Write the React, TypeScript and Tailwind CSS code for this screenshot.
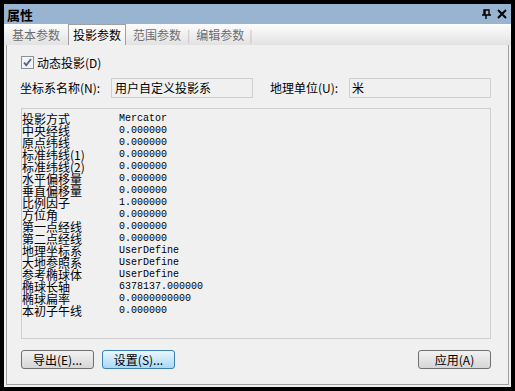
const cjk = "font-['SimSun','Noto_Sans_CJK_SC',sans-serif]"

const rows: [string, string][] = [
  ["投影方式", "Mercator"],
  ["中央经线", "0.000000"],
  ["原点纬线", "0.000000"],
  ["标准纬线(1)", "0.000000"],
  ["标准纬线(2)", "0.000000"],
  ["水平偏移量", "0.000000"],
  ["垂直偏移量", "0.000000"],
  ["比例因子", "1.000000"],
  ["方位角", "0.000000"],
  ["第一点经线", "0.000000"],
  ["第二点经线", "0.000000"],
  ["地理坐标系", "UserDefine"],
  ["大地参照系", "UserDefine"],
  ["参考椭球体", "UserDefine"],
  ["椭球长轴", "6378137.000000"],
  ["椭球扁率", "0.0000000000"],
  ["本初子午线", "0.000000"],
]

function Btn({ label, focused }: { label: string; focused?: boolean }) {
  return (
    <button
      className={
        "h-[19px] w-[73px] rounded-[3px] border text-[12px] leading-none text-black " +
        (focused
          ? "border-[#3c7fb1] bg-gradient-to-b from-[#eaf6fd] to-[#a7d9f5]"
          : "border-[#707070] bg-gradient-to-b from-[#f2f2f2] to-[#d6d6d6]")
      }
    >
      {label}
    </button>
  )
}

export default function App() {
  return (
    <div className={`w-[515px] h-[391px] bg-black p-[4px] ${cjk}`}>
      <div className="flex h-full flex-col bg-[#f0f0f0]">
        {/* title bar */}
        <div className="flex h-[20px] items-center bg-[#99b4d1] pl-[3px] pr-[4px]">
          <span className="text-[13px] font-bold leading-none text-black">属性</span>
          <div className="ml-auto flex items-center gap-[6px]">
            <svg width="9" height="10" viewBox="0 0 9 10">
              <path d="M2 1h5v5H2z M3 1v5 M0 6h9 M4 6v4" stroke="#000" strokeWidth="1.4" fill="none" />
            </svg>
            <svg width="10" height="10" viewBox="0 0 10 10">
              <path d="M1 1L9 9M9 1L1 9" stroke="#000" strokeWidth="2" />
            </svg>
          </div>
        </div>

        {/* tabs */}
        <div className="flex h-[21px] items-end bg-gradient-to-b from-[#fdfdfd] to-[#e2e2e2] pl-[3px] text-[12px] leading-none text-[#6d6d6d]">
          <div className="flex h-[20px] items-center px-[5px]">基本参数</div>
          <div className="ml-[3px] flex h-[21px] items-center border border-b-0 border-[#a0a0a0] bg-gradient-to-b from-[#ffffff] to-[#eeeeee] px-[4px] text-black">
            投影参数
          </div>
          <div className="flex h-[20px] items-center pl-[7px]">范围参数</div>
          <div className="flex h-[20px] items-center px-[6px] text-[#c0c0c0]">|</div>
          <div className="flex h-[20px] items-center">编辑参数</div>
          <div className="flex h-[20px] items-center px-[5px] text-[#c0c0c0]">|</div>
        </div>

        {/* page */}
        <div className="mx-[2px] mb-[2px] flex flex-1 flex-col border-x border-b border-[#a0a0a0] bg-[#f0f0f0] pl-[13px] pr-[17px] text-[12px] text-black">
          <div className="mt-[10px] flex h-[15px] items-center gap-[3px] pl-[1px]">
            <svg width="13" height="13" viewBox="0 0 13 13">
              <rect x="0.5" y="0.5" width="12" height="12" fill="#f4f4f4" stroke="#8e8f8f" />
              <path d="M3 6.5l2.2 2.8L10 3" stroke="#4a5f97" strokeWidth="1.8" fill="none" />
            </svg>
            <span className="leading-none">动态投影(D)</span>
          </div>

          <div className="mt-[8px] flex h-[20px] items-center">
            <span className="w-[91px] leading-none">坐标系名称(N):</span>
            <div className="flex h-[20px] w-[142px] items-center border border-[#cfcfcf] px-[3px] leading-none">用户自定义投影系</div>
            <span className="ml-[17px] w-[79px] leading-none">地理单位(U):</span>
            <div className="flex h-[20px] flex-1 items-center border border-[#cfcfcf] px-[2px] leading-none">米</div>
          </div>

          <div className="ml-[1px] mt-[10px] h-[231px] border border-[#cfcfcf] pl-[0px] pt-[4px]">
            {rows.map(([k, v]) => (
              <div key={k} className="flex h-[12px] items-center leading-[12px]">
                <span className="w-[97px] text-[12px]">{k}</span>
                <span className="font-['Liberation_Mono',monospace] text-[10px]">{v}</span>
              </div>
            ))}
          </div>

          <div className="mt-[11px] flex items-center pl-[1px]">
            <Btn label="导出(E)..." />
            <div className="ml-[8px]">
              <Btn label="设置(S)..." focused />
            </div>
            <div className="ml-auto">
              <Btn label="应用(A)" />
            </div>
          </div>
        </div>
      </div>
    </div>
  )
}
